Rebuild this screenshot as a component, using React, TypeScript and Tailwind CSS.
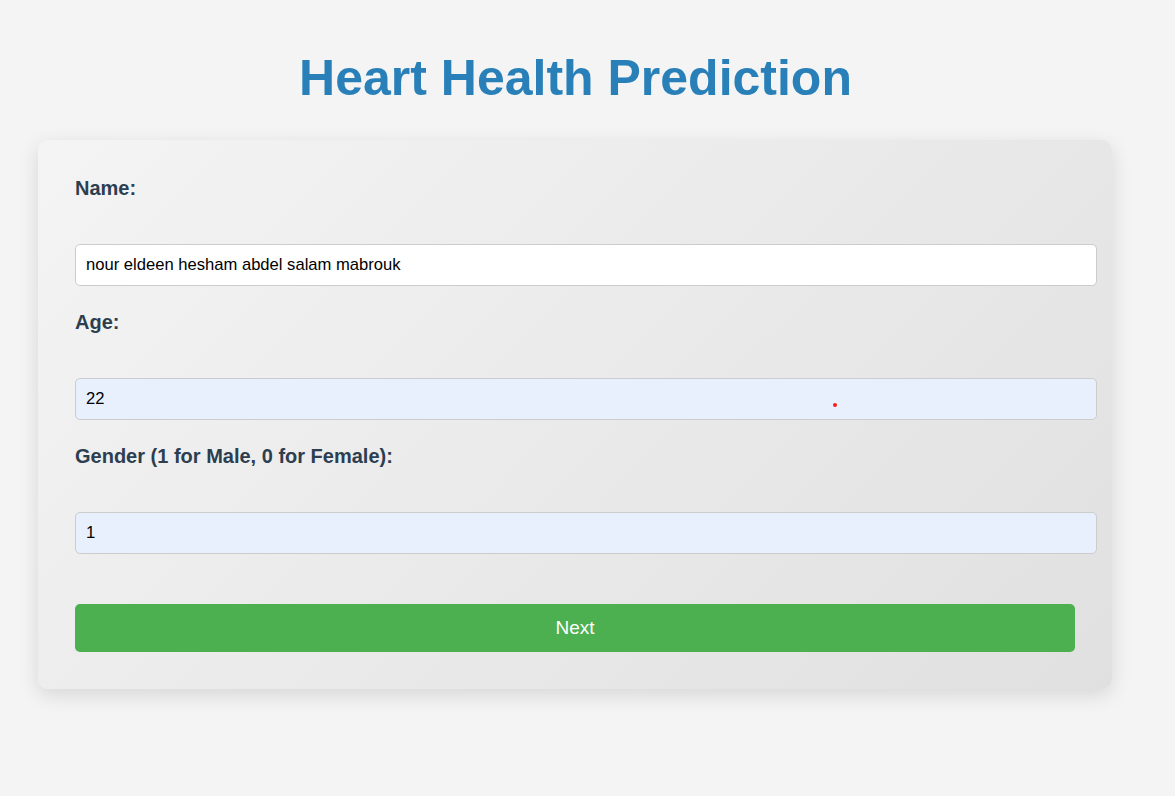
import React from "react";

export default function App() {
  const font = { fontFamily: '"Liberation Sans", Arial, sans-serif' };
  return (
    <div className="min-h-[796px] w-full bg-[#f4f4f4]" style={font}>
      <div className="w-[1151px] pt-[49px]">
        <h1 className="text-center text-[50px] font-bold leading-[58px] text-[#2980b9]">
          Heart Health Prediction
        </h1>
        <div className="ml-[38px] mt-[33px] w-[1074px] rounded-[10px] bg-[linear-gradient(135deg,#f4f4f4,#e0e0e0)] p-[37px] shadow-[0_6px_20px_rgba(0,0,0,0.12)]">
          <form className="flex w-[1000px] flex-col" onSubmit={(e) => e.preventDefault()}>
            <label className="mb-[45px] block text-[20px] font-bold leading-[22px] text-[#2c3e50]">Name:</label>
            <input
              type="text"
              defaultValue="nour eldeen hesham abdel salam mabrouk"
              className="mb-[25px] box-content h-[20px] w-full rounded-[5px] border border-[#cccccc] bg-white px-[10px] py-[10px] text-[16.6px] text-black outline-none"
              style={font}
            />
            <label className="mb-[45px] block text-[20px] font-bold leading-[22px] text-[#2c3e50]">Age:</label>
            <div className="relative mb-[25px]">
              <input
                type="text"
                defaultValue="22"
                className="box-content h-[20px] w-full rounded-[5px] border border-[#cccccc] bg-[#e8f0fe] px-[10px] py-[10px] text-[16.6px] text-black outline-none"
                style={font}
              />
              <span className="absolute left-[758px] top-[25px] h-[4px] w-[4px] rounded-full bg-[#ff1a1a]" />
            </div>
            <label className="mb-[45px] block text-[20px] font-bold leading-[22px] text-[#2c3e50]">
              Gender (1 for Male, 0 for Female):
            </label>
            <input
              type="text"
              defaultValue="1"
              className="mb-[50px] box-content h-[20px] w-full rounded-[5px] border border-[#cccccc] bg-[#e8f0fe] px-[10px] py-[10px] text-[16.6px] text-black outline-none"
              style={font}
            />
            <button
              type="submit"
              className="h-[48px] w-full rounded-[5px] bg-[#4caf50] text-[19px] text-white"
              style={font}
            >
              Next
            </button>
          </form>
        </div>
      </div>
    </div>
  );
}
